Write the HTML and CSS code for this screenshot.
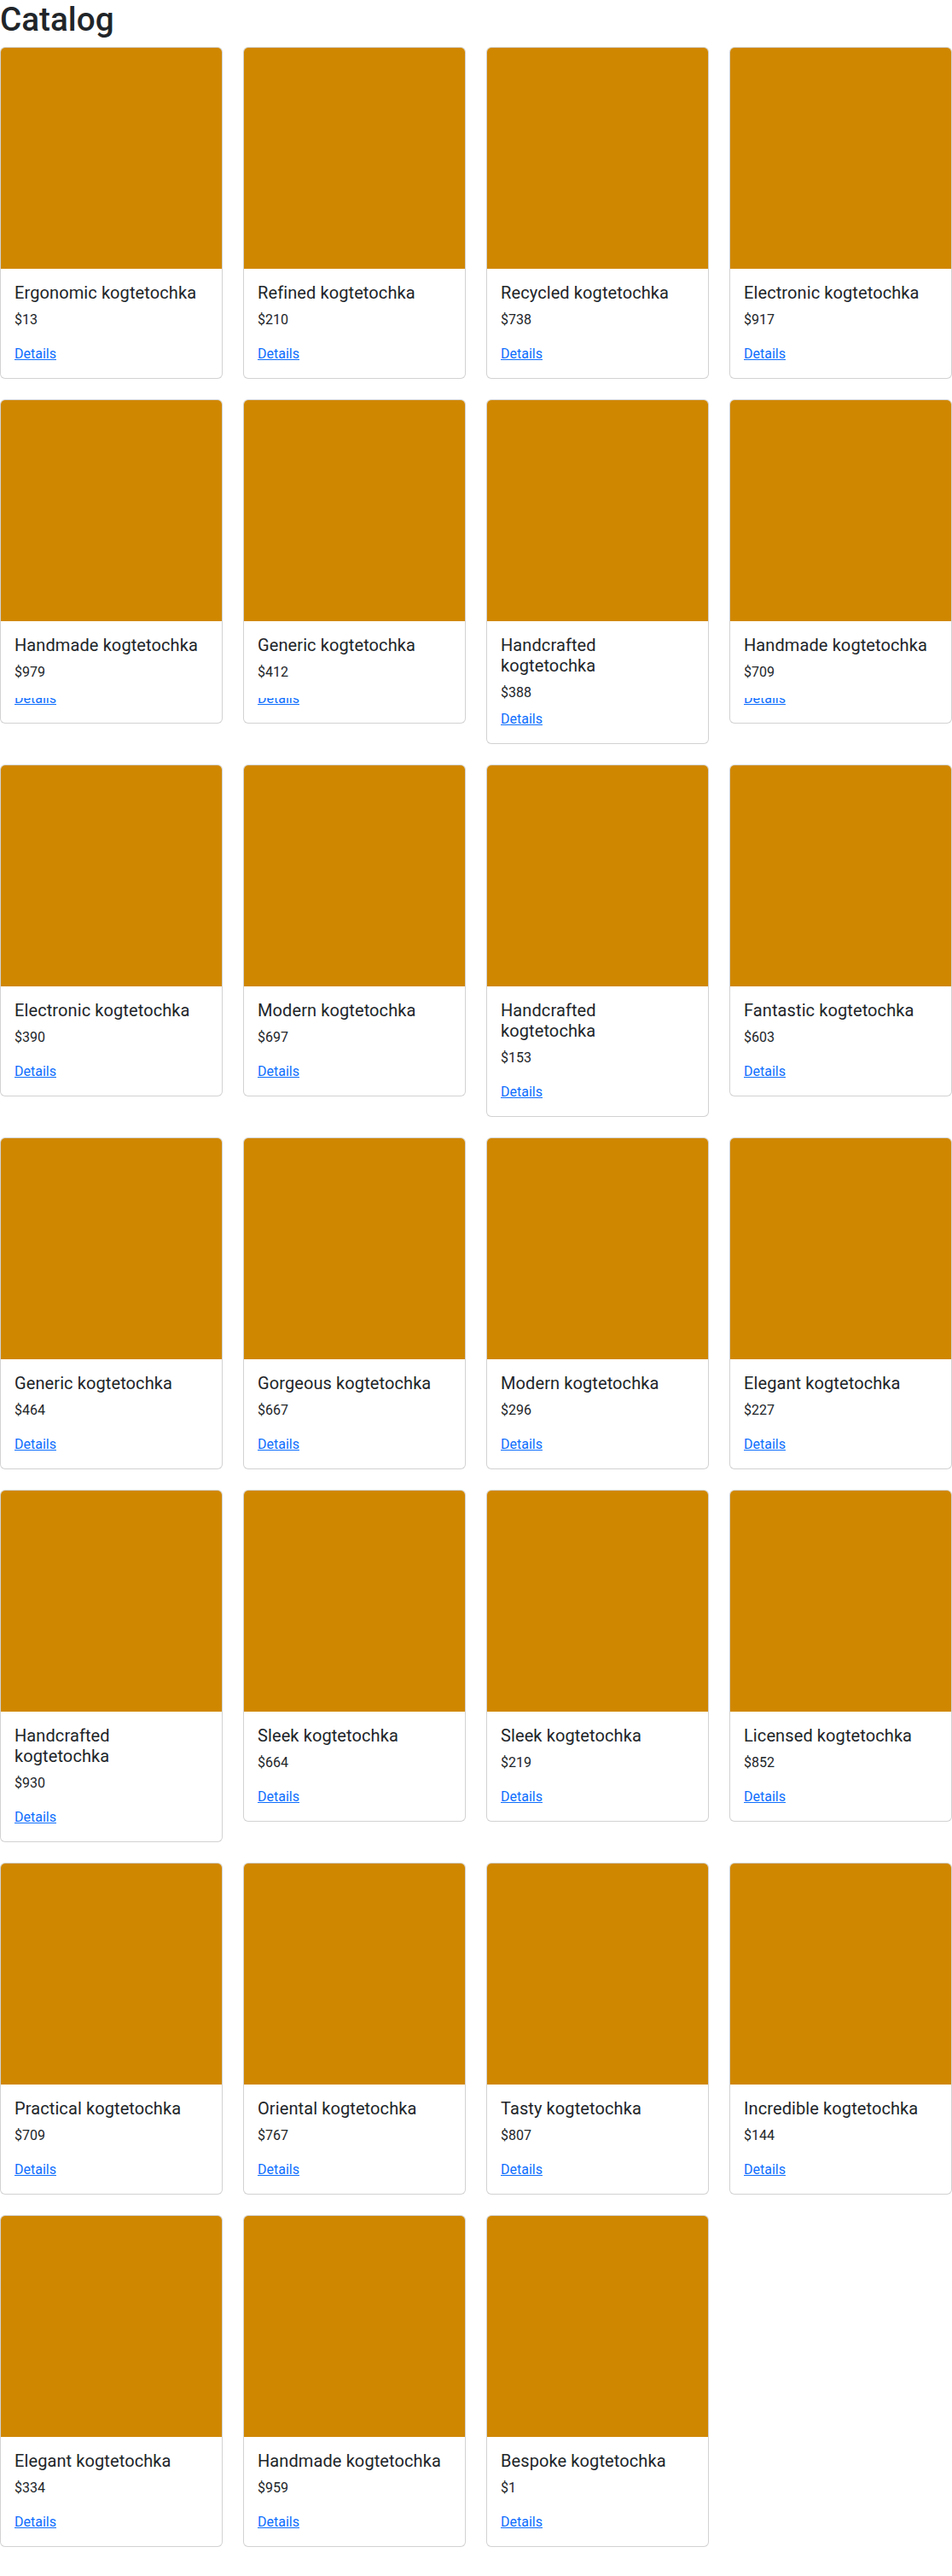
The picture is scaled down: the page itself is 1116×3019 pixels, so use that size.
FILE: index.html
```html
<!DOCTYPE html>
<html lang="en">
<head>
<meta charset="utf-8">
<title>Catalog</title>
<link rel="stylesheet" href="styles.css">
</head>
<body>
<main class="page">
  <h1 class="page-title">Catalog</h1>
  <div class="catalog">
    <div class="card"><div class="card-img"></div><div class="card-body"><h5 class="card-title">Ergonomic kogtetochka</h5><p class="card-price">$13</p><div class="card-link"><a href="#">Details</a></div></div></div>
    <div class="card"><div class="card-img"></div><div class="card-body"><h5 class="card-title">Refined kogtetochka</h5><p class="card-price">$210</p><div class="card-link"><a href="#">Details</a></div></div></div>
    <div class="card"><div class="card-img"></div><div class="card-body"><h5 class="card-title">Recycled kogtetochka</h5><p class="card-price">$738</p><div class="card-link"><a href="#">Details</a></div></div></div>
    <div class="card"><div class="card-img"></div><div class="card-body"><h5 class="card-title">Electronic kogtetochka</h5><p class="card-price">$917</p><div class="card-link"><a href="#">Details</a></div></div></div>

    <div class="card card--compact"><div class="card-img"></div><div class="card-body"><h5 class="card-title">Handmade kogtetochka</h5><p class="card-price">$979</p><div class="card-link card-link--clipped"><a href="#">Details</a></div></div></div>
    <div class="card card--compact"><div class="card-img"></div><div class="card-body"><h5 class="card-title">Generic kogtetochka</h5><p class="card-price">$412</p><div class="card-link card-link--clipped"><a href="#">Details</a></div></div></div>
    <div class="card card--compact"><div class="card-img"></div><div class="card-body"><h5 class="card-title">Handcrafted kogtetochka</h5><p class="card-price">$388</p><div class="card-link"><a href="#">Details</a></div></div></div>
    <div class="card card--compact"><div class="card-img"></div><div class="card-body"><h5 class="card-title">Handmade kogtetochka</h5><p class="card-price">$709</p><div class="card-link card-link--clipped"><a href="#">Details</a></div></div></div>

    <div class="card"><div class="card-img"></div><div class="card-body"><h5 class="card-title">Electronic kogtetochka</h5><p class="card-price">$390</p><div class="card-link"><a href="#">Details</a></div></div></div>
    <div class="card"><div class="card-img"></div><div class="card-body"><h5 class="card-title">Modern kogtetochka</h5><p class="card-price">$697</p><div class="card-link"><a href="#">Details</a></div></div></div>
    <div class="card"><div class="card-img"></div><div class="card-body"><h5 class="card-title">Handcrafted kogtetochka</h5><p class="card-price">$153</p><div class="card-link"><a href="#">Details</a></div></div></div>
    <div class="card"><div class="card-img"></div><div class="card-body"><h5 class="card-title">Fantastic kogtetochka</h5><p class="card-price">$603</p><div class="card-link"><a href="#">Details</a></div></div></div>

    <div class="card"><div class="card-img"></div><div class="card-body"><h5 class="card-title">Generic kogtetochka</h5><p class="card-price">$464</p><div class="card-link"><a href="#">Details</a></div></div></div>
    <div class="card"><div class="card-img"></div><div class="card-body"><h5 class="card-title">Gorgeous kogtetochka</h5><p class="card-price">$667</p><div class="card-link"><a href="#">Details</a></div></div></div>
    <div class="card"><div class="card-img"></div><div class="card-body"><h5 class="card-title">Modern kogtetochka</h5><p class="card-price">$296</p><div class="card-link"><a href="#">Details</a></div></div></div>
    <div class="card"><div class="card-img"></div><div class="card-body"><h5 class="card-title">Elegant kogtetochka</h5><p class="card-price">$227</p><div class="card-link"><a href="#">Details</a></div></div></div>

    <div class="card"><div class="card-img"></div><div class="card-body"><h5 class="card-title">Handcrafted kogtetochka</h5><p class="card-price">$930</p><div class="card-link"><a href="#">Details</a></div></div></div>
    <div class="card"><div class="card-img"></div><div class="card-body"><h5 class="card-title">Sleek kogtetochka</h5><p class="card-price">$664</p><div class="card-link"><a href="#">Details</a></div></div></div>
    <div class="card"><div class="card-img"></div><div class="card-body"><h5 class="card-title">Sleek kogtetochka</h5><p class="card-price">$219</p><div class="card-link"><a href="#">Details</a></div></div></div>
    <div class="card"><div class="card-img"></div><div class="card-body"><h5 class="card-title">Licensed kogtetochka</h5><p class="card-price">$852</p><div class="card-link"><a href="#">Details</a></div></div></div>

    <div class="card"><div class="card-img"></div><div class="card-body"><h5 class="card-title">Practical kogtetochka</h5><p class="card-price">$709</p><div class="card-link"><a href="#">Details</a></div></div></div>
    <div class="card"><div class="card-img"></div><div class="card-body"><h5 class="card-title">Oriental kogtetochka</h5><p class="card-price">$767</p><div class="card-link"><a href="#">Details</a></div></div></div>
    <div class="card"><div class="card-img"></div><div class="card-body"><h5 class="card-title">Tasty kogtetochka</h5><p class="card-price">$807</p><div class="card-link"><a href="#">Details</a></div></div></div>
    <div class="card"><div class="card-img"></div><div class="card-body"><h5 class="card-title">Incredible kogtetochka</h5><p class="card-price">$144</p><div class="card-link"><a href="#">Details</a></div></div></div>

    <div class="card"><div class="card-img"></div><div class="card-body"><h5 class="card-title">Elegant kogtetochka</h5><p class="card-price">$334</p><div class="card-link"><a href="#">Details</a></div></div></div>
    <div class="card"><div class="card-img"></div><div class="card-body"><h5 class="card-title">Handmade kogtetochka</h5><p class="card-price">$959</p><div class="card-link"><a href="#">Details</a></div></div></div>
    <div class="card"><div class="card-img"></div><div class="card-body"><h5 class="card-title">Bespoke kogtetochka</h5><p class="card-price">$1</p><div class="card-link"><a href="#">Details</a></div></div></div>
  </div>
</main>
</body>
</html>
```

FILE: styles.css
```css
* {
  box-sizing: border-box;
}

html, body {
  margin: 0;
  padding: 0;
  background: #fff;
}

body {
  font-family: Roboto, "Liberation Sans", Arial, sans-serif;
  font-size: 16px;
  line-height: 1.5;
  color: #212529;
}

.page {
  width: 1116px;
  padding-bottom: 34px;
}

.page-title {
  margin: 0 0 8px 0;
  font-size: 38.7px;
  font-weight: 500;
  line-height: 1.2;
  color: #212529;
  height: 47px;
}

.catalog {
  display: grid;
  grid-template-columns: repeat(4, 261px);
  column-gap: 24px;
  row-gap: 24px;
  align-items: start;
}

.card {
  display: flex;
  flex-direction: column;
  border: 1px solid rgba(0, 0, 0, 0.175);
  border-radius: 6px;
  background: #fff;
  overflow: hidden;
}

.card-img {
  height: 259px;
  background: #d08700;
}

.card-body {
  padding: 16px;
}

.card-title {
  margin: 0 0 8px 0;
  font-size: 20px;
  font-weight: 400;
  line-height: 24px;
  letter-spacing: 0.1px;
  color: #212529;
}

.card-price {
  margin: 0 0 16px 0;
  line-height: 24px;
}

.card--compact .card-price {
  margin-bottom: 7px;
}

.card-link {
  line-height: 24px;
}

.card-link a {
  color: #0d6efd;
  text-decoration: underline;
}

.card-link--clipped {
  clip-path: inset(11px 0 0 0);
}
```
